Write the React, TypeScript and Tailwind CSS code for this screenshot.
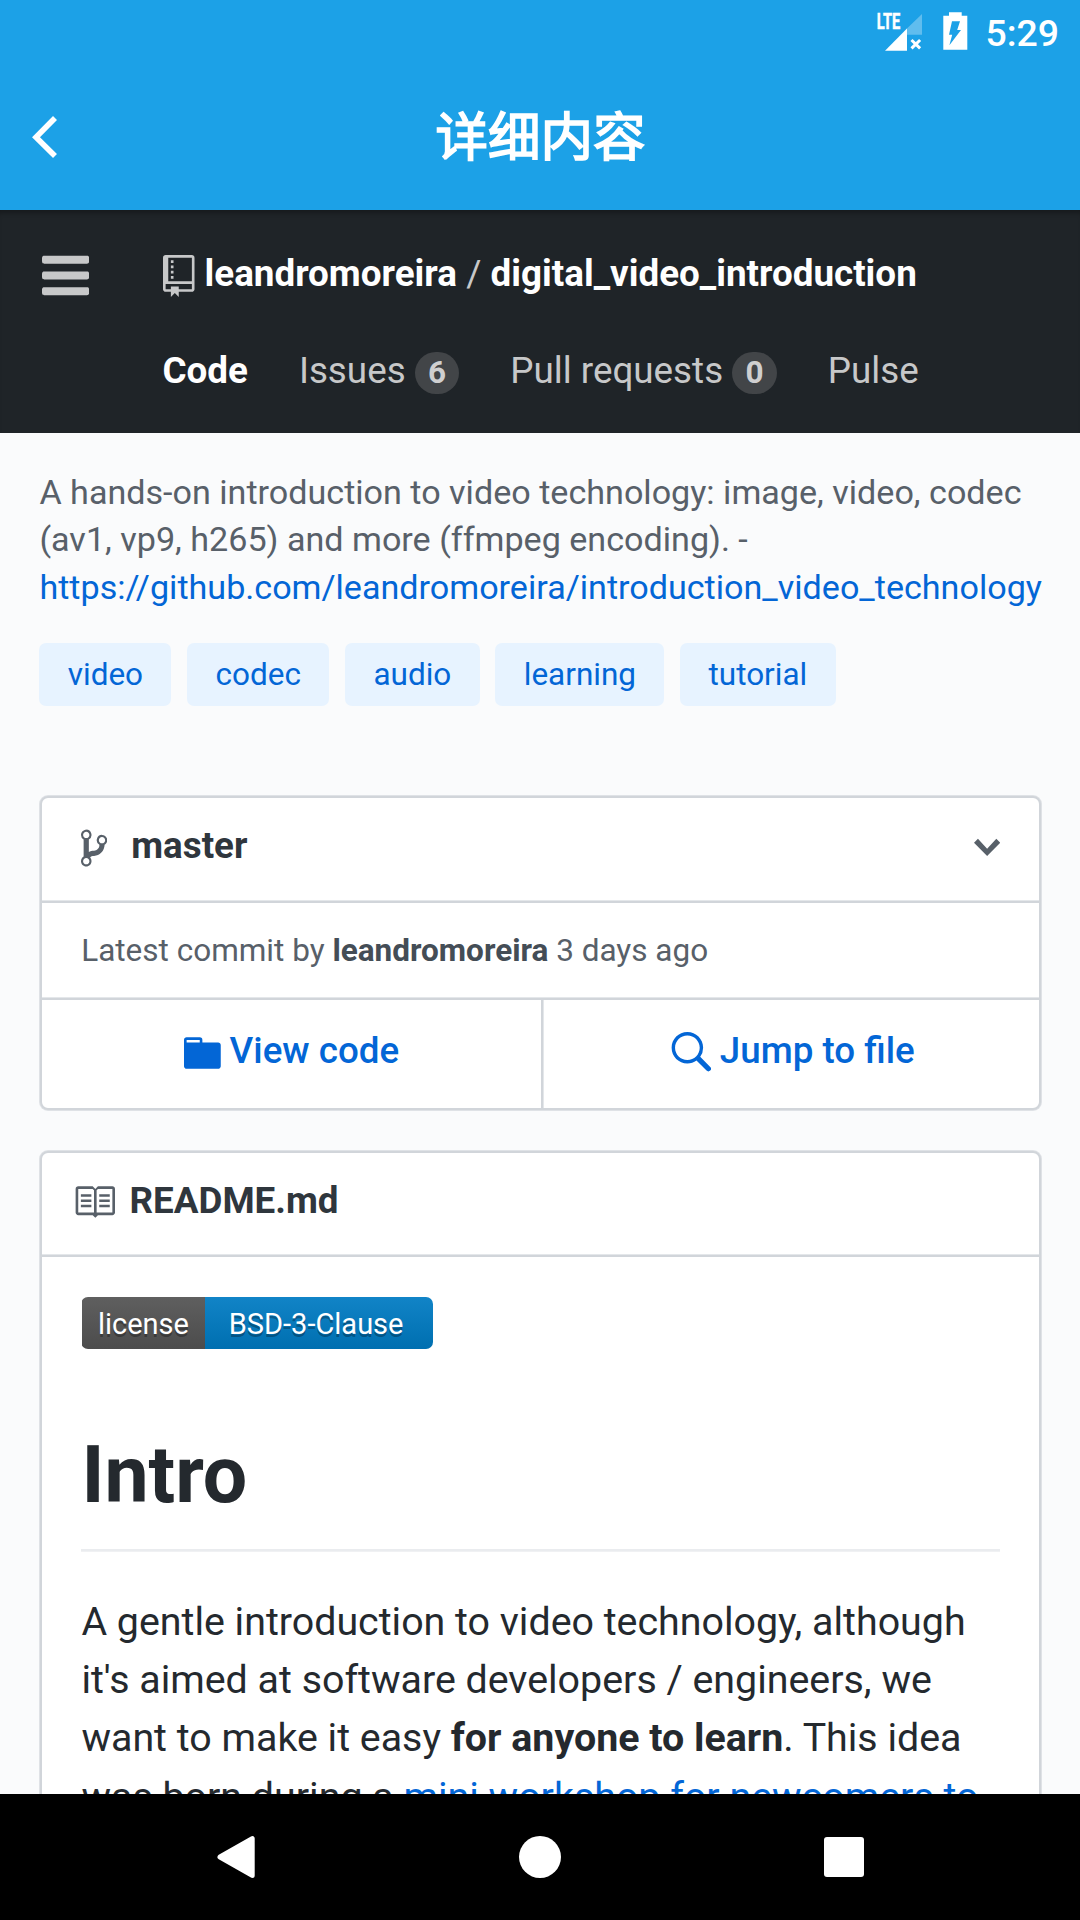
import type { ReactNode } from "react";

const paths = {
  repo: "M4 9H3V8h1v1zm0-3H3v1h1V6zm0-2H3v1h1V4zm0-2H3v1h1V2zm8-1v12c0 .55-.45 1-1 1H6v2l-1.5-1.5L3 16v-2H1c-.55 0-1-.45-1-1V1c0-.55.45-1 1-1h10c.55 0 1 .45 1 1zm-1 10H1v2h2v-1h3v1h5v-2zm0-10H2v9h9V1z",
  bars: "M11.41 9H.59C0 9 0 8.59 0 8c0-.59 0-1 .59-1H11.4c.59 0 .59.41.59 1 0 .59 0 1-.59 1h.01zm0-4H.59C0 5 0 4.59 0 4c0-.59 0-1 .59-1H11.4c.59 0 .59.41.59 1 0 .59 0 1-.59 1h.01zM.59 11H11.4c.59 0 .59.41.59 1 0 .59 0 1-.59 1H.59C0 13 0 12.59 0 12c0-.59 0-1 .59-1z",
  branch: "M10 5c0-1.11-.89-2-2-2a1.993 1.993 0 0 0-1 3.72v.3c-.02.52-.23.98-.63 1.38-.4.4-.86.61-1.38.63-.83.02-1.48.16-2 .45V4.72a1.993 1.993 0 0 0-1-3.72C.88 1 0 1.89 0 3a2 2 0 0 0 1 1.72v6.56c-.59.35-1 .99-1 1.72 0 1.11.89 2 2 2 1.11 0 2-.89 2-2 0-.53-.2-1-.53-1.36.09-.06.48-.41.59-.47.25-.11.56-.17.94-.17 1.05-.05 1.95-.45 2.75-1.25S8.95 7.77 9 6.73h-.02C9.59 6.37 10 5.73 10 5zM2 1.8c.66 0 1.2.55 1.2 1.2 0 .65-.55 1.2-1.2 1.2C1.35 4.2.8 3.65.8 3c0-.65.55-1.2 1.2-1.2zm0 12.41c-.66 0-1.2-.55-1.2-1.2 0-.65.55-1.2 1.2-1.2.65 0 1.2.55 1.2 1.2 0 .65-.55 1.2-1.2 1.2zm6-8c-.66 0-1.2-.55-1.2-1.2 0-.65.55-1.2 1.2-1.2.65 0 1.2.55 1.2 1.2 0 .65-.55 1.2-1.2 1.2z",
  folder: "M13 4H7V3c0-.66-.31-1-1-1H1c-.55 0-1 .45-1 1v10c0 .55.45 1 1 1h12c.55 0 1-.45 1-1V5c0-.55-.45-1-1-1zM6 4H1V3h5v1z",
  search: "M15.7 13.3l-3.81-3.83A5.93 5.93 0 0 0 13 6c0-3.31-2.69-6-6-6S1 2.69 1 6s2.69 6 6 6c1.3 0 2.48-.41 3.47-1.11l3.83 3.81c.19.2.45.3.7.3.25 0 .52-.09.7-.3a.996.996 0 0 0 0-1.41v.01zM7 10.7c-2.59 0-4.7-2.11-4.7-4.7 0-2.59 2.11-4.7 4.7-4.7 2.59 0 4.7 2.11 4.7 4.7 0 2.59-2.11 4.7-4.7 4.7z",
  book: "M3 5h4v1H3V5zm0 3h4V7H3v1zm0 2h4V9H3v1zm11-5h-4v1h4V5zm0 2h-4v1h4V7zm0 2h-4v1h4V9zm2-6v9c0 .55-.45 1-1 1H9.5l-1 1-1-1H2c-.55 0-1-.45-1-1V3c0-.55.45-1 1-1h5.5l1 1 1-1H15c.55 0 1 .45 1 1zm-8 .5L7.5 3H2v9h6V3.5zm7-.5H9.5l-.5.5V12h6V3z",
  chevron: "M5 11L0 6l1.5-1.5L5 8.25 8.5 4.5 10 6l-5 5z",
};

function Icon({ name, width, className }: { name: keyof typeof paths; width: number; className: string }) {
  return (
    <svg viewBox={`0 0 ${width} 16`} className={`shrink-0 fill-current ${className}`}>
      <path fillRule="evenodd" d={paths[name]} />
    </svg>
  );
}

function StatusBar() {
  return (
    <div className="flex h-[63px] items-start justify-end pr-[21px] text-white">
      <svg viewBox="0 0 48 54" className="h-[54px] w-[48px]">
        <text x="0.7" y="29.3" textLength="23.6" lengthAdjust="spacingAndGlyphs" fill="#fff" stroke="#fff" strokeWidth="0.5" className="font-[Roboto] text-[22.4px] font-bold">LTE</text>
        <path d="M30.7 28.7L46 14v20.7H30.7z" fill="#fff" fillOpacity="0.3" />
        <path d="M9 50.8L31 28.5v22.3z" fill="#fff" />
        <path d="M35.5 40l8.6 8.4M44.1 40l-8.6 8.4" stroke="#fff" strokeWidth="3" />
      </svg>
      <svg viewBox="0 0 26 54" className="ml-[18.5px] h-[54px] w-[26px]">
        <path fillRule="evenodd" fill="#fff" d="M6 12.3h12.7v3.4h5.6v34H.3v-34H6zM9 21.3L6 34.7h3.2L6.4 45.3 18 30h-3.8l2.8-8.7z" />
      </svg>
      <div className="ml-[16.5px] mt-[8.5px] text-[37.4px] leading-[48px] font-medium">5:29</div>
    </div>
  );
}

function TitleBar() {
  return (
    <div className="grid h-[147px] grid-cols-[1fr_auto_1fr] items-center text-white">
      <svg viewBox="0 0 26 44" className="ml-[31px] h-[44px] w-[26px]">
        <path d="M24 3L5 22.2 24 41" fill="none" stroke="#fff" strokeWidth="5.6" />
      </svg>
      <h1 className="pb-[7px] pl-[1px] font-['Noto_Sans_CJK_SC',sans-serif] text-[52.5px] leading-[70px] font-normal [-webkit-text-stroke:1.7px_white]">详细内容</h1>
    </div>
  );
}

function Counter({ children }: { children: ReactNode }) {
  return (
    <span className="mt-[5px] ml-[9px] h-[42.5px] w-[44.6px] rounded-full bg-[#424548] text-center text-[31.5px] leading-[42px] font-bold text-[#cfcfd0]">
      {children}
    </span>
  );
}

function RepoHeader() {
  return (
    <header className="flex h-[223px] items-start bg-[#1f2428] pt-[39px] text-[36.8px] leading-[48px] text-[#c7c8c9] shadow-[inset_0_6px_5px_-3px_rgba(0,0,0,0.3)]">
      <Icon name="bars" width={12} className="mt-[-4.8px] ml-[42px] h-[63px] w-[47.25px]" />
      <div className="ml-[73.2px]">
        <div className="ml-[0.6px] flex pt-[1px] text-white">
          <Icon name="repo" width={12} className="mt-[5px] mr-[10px] h-[42px] w-[31.5px] text-[#c7c8c9]" />
          <span className="font-bold">leandromoreira</span>
          <span className="mx-[9.3px] text-[#c7c8c9]">/</span>
          <span className="font-bold">digital_video_introduction</span>
        </div>
        <nav className="mt-[48.5px] flex gap-[51px]">
          <span className="font-bold text-white">Code</span>
          <span className="flex">Issues<Counter>6</Counter></span>
          <span className="flex">Pull requests<Counter>0</Counter></span>
          <span>Pulse</span>
        </nav>
      </div>
    </header>
  );
}

function BranchCard() {
  return (
    <section className="mt-[90px] ml-[1px] w-[1001px] rounded-[8px] border-2 border-[#d1d5da] bg-white shadow-[0_0_0_1px_#dfe2e6]">
      <div className="flex h-[103px] items-start pr-[39px] pl-[39px] text-[36.75px] leading-[48px] text-[#586069]">
        <Icon name="branch" width={10} className="mt-[28.7px] h-[42px] w-[26.25px]" />
        <span className="mt-[24.5px] ml-[24px] flex-1 font-bold text-[#2f363d]">master</span>
        <Icon name="chevron" width={10} className="mt-[29.2px] h-[42px] w-[26.25px]" />
      </div>
      <div className="h-[97px] border-t-2 border-[#d1d5da] pt-[24px] pl-[39.2px] text-[31.5px] leading-[48px] text-[#586069] shadow-[0_-1px_0_#e4e7ea]">
        Latest commit by <span className="font-bold text-[#444d56]">leandromoreira</span> 3 days ago
      </div>
      <div className="grid h-[110px] grid-cols-[501px_1fr] border-t-2 border-[#d1d5da] text-[36.75px] leading-[48px] font-medium text-[#0366d6] shadow-[0_-1px_0_#e4e7ea]">
        <div className="flex items-start justify-center gap-[9px] border-r-2 border-[#d1d5da] pt-[27.5px] shadow-[1px_0_0_#e4e7ea]">
          <Icon name="folder" width={14} className="mt-[4.2px] h-[42px] w-[36.75px]" />
          View code
        </div>
        <div className="flex items-start justify-center gap-[8.6px] pt-[27.5px] pl-[2px]">
          <Icon name="search" width={16} className="mt-[4.2px] h-[42px] w-[42px]" />
          Jump to file
        </div>
      </div>
    </section>
  );
}

function ReadmeCard() {
  return (
    <section className="mt-[41px] ml-[1px] h-[800px] w-[1001px] rounded-[8px] border-2 border-[#d1d5da] bg-white shadow-[0_0_0_1px_#dfe2e6]">
      <div className="flex h-[102px] items-start pl-[31px] text-[36.8px] leading-[48px] text-[#586069]">
        <Icon name="book" width={16} className="mt-[27.8px] h-[42px] w-[42px]" />
        <span className="mt-[24.5px] ml-[14.5px] font-bold text-[#2f363d]">README.md</span>
      </div>
      <div className="border-t-2 border-[#d1d5da] pr-[39px] pl-[39.4px] pt-[40px] text-[#24292e] shadow-[0_-1px_0_#e4e7ea]">
        <div className="flex h-[52.5px] w-[351.5px] overflow-hidden rounded-[7px] pl-[0.5px] text-[29px] leading-[54px] text-white [text-shadow:0_2.6px_0_rgba(1,1,1,0.3)]">
          <span className="w-[122.9px] bg-linear-to-b from-[#5f5f5f] to-[#4c4c4c] pl-[16px]">license</span>
          <span className="flex-1 bg-linear-to-b from-[#1184c7] to-[#006fb0] pl-[24px]">BSD-3-Clause</span>
        </div>
        <h2 className="mt-[75.5px] border-b-2 border-[#eaecef] pb-[24px] text-[78.75px] leading-[100px] font-bold shadow-[0_1px_0_#f0f1f3]">Intro</h2>
        <p className="mt-[42px] text-[39.375px] leading-[58.2px] whitespace-nowrap">
          A gentle introduction to video technology, although<br />
          it's aimed at software developers / engineers, we<br />
          want to make it easy <b className="font-bold">for anyone to learn</b>. This idea<br />
          was born during a <span className="text-[#0366d6]">mini workshop for newcomers to</span>
        </p>
      </div>
    </section>
  );
}

function NavBar() {
  return (
    <div className="flex h-[126px] items-center bg-black pl-[216px]">
      <svg viewBox="0 0 40 44" className="h-[44px] w-[40px]">
        <path d="M4 22L36.2 3.6v36.8z" fill="#fff" stroke="#fff" strokeWidth="5" strokeLinejoin="round" />
      </svg>
      <div className="ml-[263px] size-[42px] rounded-full bg-white" />
      <div className="ml-[263px] size-[40px] rounded-[3px] bg-white" />
    </div>
  );
}

const topics = ["video", "codec", "audio", "learning", "tutorial"];

export default function App() {
  return (
    <div className="flex h-[1920px] w-[1080px] flex-col overflow-hidden bg-[#fafbfc] font-[Roboto,sans-serif]">
      <div className="bg-[#1ca1e7]">
        <StatusBar />
        <TitleBar />
      </div>
      <RepoHeader />
      <main className="h-[1361px] overflow-hidden px-[39px] pt-[36px]">
        <p className="ml-[0.4px] text-[34.125px] leading-[47.25px] whitespace-nowrap text-[#586069]">
          A hands-on introduction to video technology: image, video, codec<br />
          (av1, vp9, h265) and more (ffmpeg encoding). -<br />
          <span className="text-[#0366d6]">https://github.com/leandromoreira/introduction_video_technology</span>
        </p>
        <div className="mt-[32.2px] ml-[0.4px] flex gap-[15.75px]">
          {topics.map((t) => (
            <span key={t} className="h-[63px] rounded-[7px] bg-[#e7f3ff] px-[28.35px] text-[31.5px] leading-[64px] text-[#0366d6]">{t}</span>
          ))}
        </div>
        <BranchCard />
        <ReadmeCard />
      </main>
      <NavBar />
    </div>
  );
}
